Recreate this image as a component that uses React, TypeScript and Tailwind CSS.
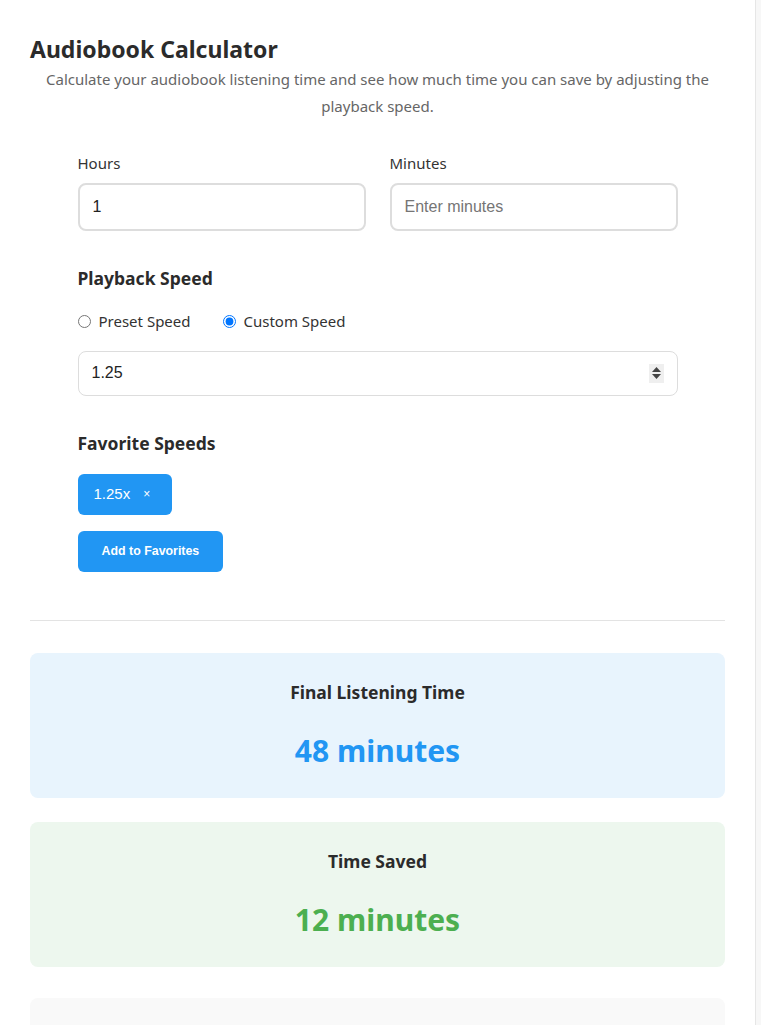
import React, { useState } from 'react';

const sans = { fontFamily: '"Noto Sans", "Open Sans", sans-serif' };
const arial = { fontFamily: '"Liberation Sans", Arial, sans-serif' };

export default function App() {
  const [hours, setHours] = useState('1');
  const [minutes, setMinutes] = useState('');
  const [mode, setMode] = useState<'preset' | 'custom'>('custom');
  const [speed, setSpeed] = useState('1.25');
  const [favorites, setFavorites] = useState<number[]>([1.25]);

  const total = (Number(hours) || 0) * 60 + (Number(minutes) || 0);
  const s = Number(speed) || 1;
  const final = Math.round(total / s);
  const saved = total - final;

  const bump = (d: number) => setSpeed(v => String(Math.round(((Number(v) || 0) + d) * 100) / 100));

  return (
    <div className="min-h-screen bg-[#f7f7f7] flex">
      <div className="w-[756px] bg-white border-r border-[#e6e6e6] px-[30px] pt-[34px] pb-10" style={sans}>
        <h1 className="text-[23px] font-bold text-[#2b2b2b] leading-[30px]">Audiobook Calculator</h1>
        <p className="text-[15px] text-[#666] text-center leading-[27px] mt-[2px] px-3">
          Calculate your audiobook listening time and see how much time you can save by adjusting the playback speed.
        </p>

        <div className="w-[600px] mx-auto mt-[33px]">
          <div className="grid grid-cols-2 gap-6">
            <div>
              <label className="block text-[15px] text-[#333] leading-5 mb-[10px]">Hours</label>
              <input
                type="number"
                value={hours}
                onChange={e => setHours(e.target.value)}
                className="w-full h-[48px] border-2 border-[#ddd] rounded-lg px-[13px] text-[16px] text-[#222] outline-none [appearance:textfield] [&::-webkit-inner-spin-button]:appearance-none"
                style={arial}
              />
            </div>
            <div>
              <label className="block text-[15px] text-[#333] leading-5 mb-[10px]">Minutes</label>
              <input
                type="number"
                value={minutes}
                placeholder="Enter minutes"
                onChange={e => setMinutes(e.target.value)}
                className="w-full h-[48px] border-2 border-[#ddd] rounded-lg px-[13px] text-[16px] text-[#222] placeholder:text-[#757575] outline-none [appearance:textfield] [&::-webkit-inner-spin-button]:appearance-none"
                style={arial}
              />
            </div>
          </div>

          <h3 className="text-[17.5px] font-bold text-[#2b2b2b] mt-[35px] leading-6">Playback Speed</h3>
          <div className="flex items-center gap-8 mt-[20px] text-[15px] text-[#333]">
            <label className="flex items-center gap-2">
              <input type="radio" name="mode" checked={mode === 'preset'} onChange={() => setMode('preset')} className="w-[13px] h-[13px] m-0 accent-[#0075ff]" />
              Preset Speed
            </label>
            <label className="flex items-center gap-2">
              <input type="radio" name="mode" checked={mode === 'custom'} onChange={() => setMode('custom')} className="w-[13px] h-[13px] m-0 accent-[#0075ff]" />
              Custom Speed
            </label>
          </div>
          <div className="relative mt-[18px]">
            <input
              type="number"
              step="0.05"
              value={speed}
              onChange={e => setSpeed(e.target.value)}
              className="w-full h-[45px] border border-[#ddd] rounded-lg px-[13px] text-[16px] text-[#222] outline-none [appearance:textfield] [&::-webkit-inner-spin-button]:appearance-none"
              style={arial}
            />
            {/* spinner, drawn since the native one only shows on hover */}
            <div className="absolute right-[14px] top-[13px] w-[15px] h-[19px] bg-[#efefef] flex flex-col items-center justify-center gap-[2px]">
              <button onClick={() => bump(0.05)} className="block leading-none">
                <svg width="9" height="5" viewBox="0 0 9 5"><path d="M4.5 0 L9 5 L0 5 Z" fill="#444" /></svg>
              </button>
              <button onClick={() => bump(-0.05)} className="block leading-none">
                <svg width="9" height="5" viewBox="0 0 9 5"><path d="M0 0 L9 0 L4.5 5 Z" fill="#444" /></svg>
              </button>
            </div>
          </div>

          <h3 className="text-[17.5px] font-bold text-[#2b2b2b] mt-[35px] leading-6">Favorite Speeds</h3>
          <div className="flex gap-2 mt-[19px]">
            {favorites.map(f => (
              <div key={f} className="h-[41px] pl-4 pr-[22px] rounded-md bg-[#2196f3] text-white flex items-center gap-[13px] text-[15px]" style={arial}>
                <span>{f}x</span>
                <button onClick={() => setFavorites(p => p.filter(x => x !== f))} className="text-[12px] leading-none">×</button>
              </div>
            ))}
          </div>
          <button
            onClick={() => !favorites.includes(s) && setFavorites(p => [...p, s])}
            className="mt-4 h-[41px] px-6 rounded-md bg-[#2196f3] text-white text-[12.4px] font-bold"
            style={arial}
          >
            Add to Favorites
          </button>
        </div>

        <div className="border-t border-[#e3e3e3] mt-[48px]" />

        <div className="mt-[32px] rounded-lg bg-[#e8f4fd] h-[145px] flex flex-col items-center pt-[27px]">
          <div className="text-[17.5px] font-bold text-[#2b2b2b] leading-6">Final Listening Time</div>
          <div className="text-[30px] font-bold text-[#2196f3] leading-10 mt-[27px]">{final} minutes</div>
        </div>

        <div className="mt-6 rounded-lg bg-[#edf7ee] h-[145px] flex flex-col items-center pt-[27px]">
          <div className="text-[17.5px] font-bold text-[#2b2b2b] leading-6">Time Saved</div>
          <div className="text-[30px] font-bold text-[#4caf50] leading-10 mt-[27px]">{saved} minutes</div>
        </div>

        <div className="mt-[31px] rounded-lg bg-[#f9f9f9] h-[145px]" />
      </div>
    </div>
  );
}
